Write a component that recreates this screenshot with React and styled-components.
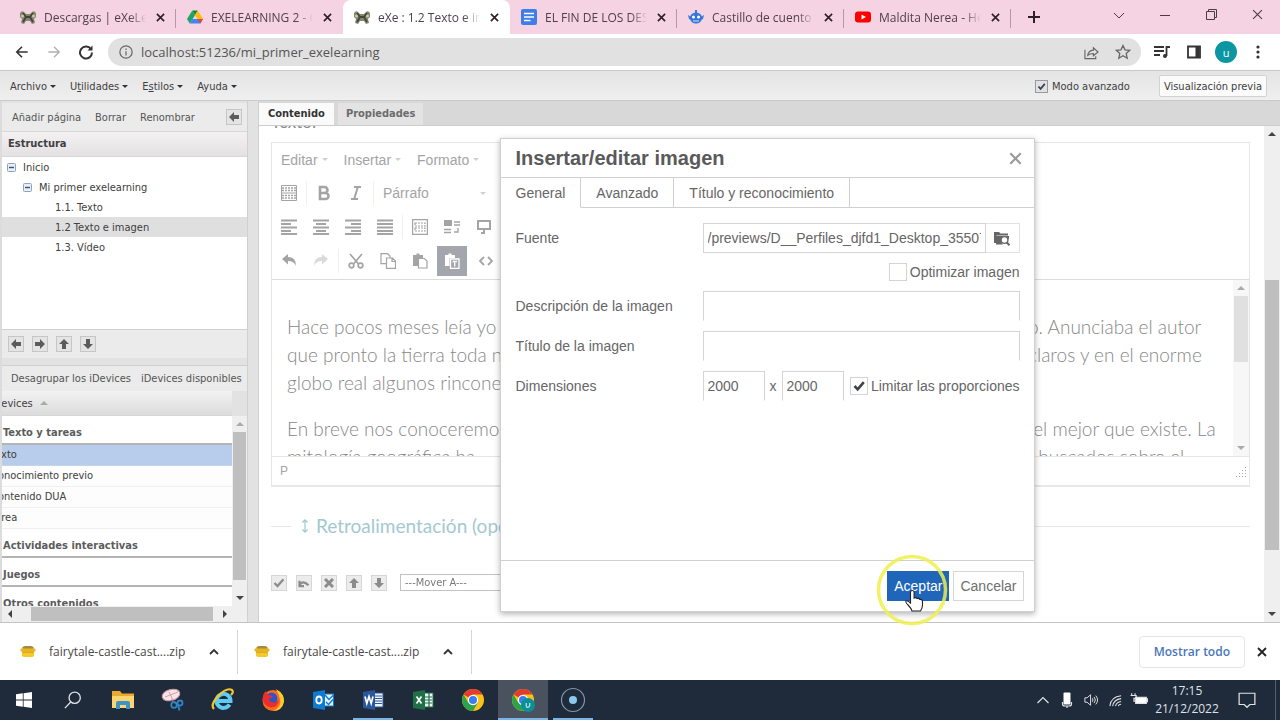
import React from "react";
import styled, { createGlobalStyle, css } from "styled-components";

const TAHOMA = `"DejaVu Sans Condensed", "DejaVu Sans", "Noto Sans", sans-serif`;
const SEGOE = `"Open Sans", "Noto Sans", sans-serif`;
const ARIAL = `"Liberation Sans", Arial, sans-serif`;
const ROUND = `Lato, "Open Sans", sans-serif`;

const GlobalStyle = createGlobalStyle`
  *, *::before, *::after { box-sizing: border-box; }
  body { margin: 0; font-family: ${TAHOMA}; font-size: 11px; color: #404040; overflow: hidden; }
  button, input, select { font: inherit; color: inherit; margin: 0; }
  button { border: 0; padding: 0; background: none; display: flex; align-items: center; justify-content: center; white-space: nowrap; }
  svg { display: block; flex: none; }
  p, h1, h2, h3 { margin: 0; }
`;

const Screen = styled.div`
  height: 100vh;
  display: flex;
  flex-direction: column;
  background: #fff;
`;

/* ---------- browser tabs ---------- */
const TabStrip = styled.header`
  flex: none;
  height: 34px;
  display: flex;
  padding-left: 9px;
  background: #f5d3e3;
  font-family: ${SEGOE};
  font-size: 12px;
  overflow: hidden;
`;
const BrowserTab = styled.div`
  flex: 0 1 167px;
  min-width: 0;
  display: flex;
  align-items: center;
  gap: 8px;
  padding: 0 10px 0 11px;
  color: #50404c;
  position: relative;
  ${(p) => p.$active && css`background: #fff; border-radius: 8px 8px 0 0;`}
  ${(p) => p.$divider && css`
    &::after { content: ""; position: absolute; right: 0; top: 9px; height: 19px; width: 1px; background: #b39aa8; }
  `}
`;
const TabTitle = styled.span`
  flex: 1;
  min-width: 0;
  white-space: nowrap;
  overflow: hidden;
  mask-image: linear-gradient(90deg, #000 84%, transparent);
`;
const TabClose = styled.button`
  width: 12px;
  height: 14px;
  color: #2c1f28;
`;
const NewTab = styled.button`
  width: 45px;
  color: #2c1f28;
`;
const WindowControls = styled.div`
  margin-left: auto;
  display: flex;
  height: 29px;
  color: #4a3c46;
`;
const WindowButton = styled.button`
  width: 46px;
`;

/* ---------- address bar ---------- */
const AddressBar = styled.div`
  flex: none;
  height: 36px;
  display: flex;
  align-items: center;
  padding: 0 6px;
  font-family: ${SEGOE};
`;
const NavButton = styled.button`
  width: 32px;
  height: 32px;
  color: ${(p) => (p.$dim ? "#b0b0b0" : "#333")};
`;
const Omnibox = styled.label`
  flex: 1;
  height: 28px;
  display: flex;
  align-items: center;
  gap: 8px;
  margin: 0 5px 0 6px;
  padding: 0 6px 0 11px;
  border-radius: 14px;
  background: #e1e1e1;
  color: #666;
`;
const Url = styled.input`
  flex: 1;
  min-width: 0;
  border: 0;
  padding: 0;
  background: none;
  color: #555;
  font-size: 13px;
`;
const OmniboxButton = styled.button`
  width: 24px;
  height: 24px;
  color: #666;
`;
const Avatar = styled.button`
  width: 22px;
  height: 22px;
  margin: 0 5px;
  border-radius: 50%;
  background: #0c96a2;
  color: #fff;
  font-size: 11px;
`;

/* ---------- application ---------- */
const Application = styled.main`
  flex: 1;
  min-height: 0;
  display: flex;
  flex-direction: column;
  border-top: 1px solid #c9c9c9;
  border-bottom: 1px solid #c4c4c4;
  background: #e2e2e2;
`;
const MenuBar = styled.nav`
  flex: none;
  height: 30px;
  display: flex;
  align-items: center;
  gap: 14px;
  padding: 1px 13px 0 10px;
  background: linear-gradient(#e4e4e4, #efefef);
  border-bottom: 1px solid #cacaca;
`;
const MenuButton = styled.button`
  gap: 3px;
  &::after {
    content: "";
    border: 3px solid transparent;
    border-top-color: #333;
    border-bottom: 0;
  }
`;
const AdvancedMode = styled.label`
  margin-left: auto;
  display: flex;
  align-items: center;
  gap: 4px;
`;
const TickBox = styled.input`
  appearance: none;
  flex: none;
  width: ${(p) => p.$size}px;
  height: ${(p) => p.$size}px;
  border: 1px solid ${(p) => (p.$size > 14 ? "#d4d4d4" : "#9a9a9a")};
  background: ${(p) => (p.$size > 14 ? "#fff" : "#dfe1e8")};
  &:checked {
    background-image: url("data:image/svg+xml,%3Csvg xmlns='http://www.w3.org/2000/svg' viewBox='0 0 16 16'%3E%3Cpath d='M3.5 8l3.2 3.4L12.8 4.2' fill='none' stroke='%23404448' stroke-width='2.6'/%3E%3C/svg%3E");
  }
`;
const PreviewButton = styled.button`
  height: 22px;
  margin-left: 15px;
  padding: 0 4px;
  border: 1px solid #d2d2d2;
  border-radius: 2px;
  background: #fbfbfb;
`;
const Workspace = styled.div`
  flex: 1;
  min-height: 0;
  display: flex;
`;

/* ---------- sidebar ---------- */
const Sidebar = styled.aside`
  flex: 0 0 248px;
  min-width: 0;
  display: flex;
  flex-direction: column;
  padding-top: 2px;
  border-left: 2px solid #dcdcdc;
  border-right: 1px solid #d0d0d0;
`;
const SideBar = styled.div`
  flex: none;
  height: ${(p) => p.$height}px;
  display: flex;
  align-items: center;
  gap: ${(p) => p.$gap}px;
  padding: 0 5px 0 ${(p) => p.$left}px;
  background: #ebebeb;
  color: #555;
`;
const PushEnd = styled.span`
  margin-left: auto;
`;
const SquareButton = styled.button`
  width: 16px;
  height: 16px;
  border: 1px solid #c6c6c6;
  background: #e4e4e4;
  color: #5c5c5c;
`;
const SectionTitle = styled.h2`
  flex: none;
  height: 26px;
  padding-left: 6px;
  font-size: 11px;
  line-height: 24px;
  background: linear-gradient(#f3f1f2, #e3e1e2);
  border-top: 1px solid #d8d8d8;
  border-bottom: 1px solid #d8d8d8;
`;
const Tree = styled.ul`
  flex: 1;
  min-height: 0;
  margin: 0;
  padding: 0;
  list-style: none;
  background: #fff;
  border-bottom: 1px solid #d0d0d0;
`;
const TreeRow = styled.li`
  height: 20px;
  display: flex;
  align-items: center;
  gap: 7px;
  padding-left: ${(p) => p.$indent}px;
  background: ${(p) => (p.$selected ? "#dfdfdf" : "none")};
`;
const Devices = styled.section`
  flex: none;
  height: 257px;
  margin-top: 7px;
  display: flex;
  flex-direction: column;
  border-top: 1px solid #d0d0d0;
`;
const DeviceHeader = styled.div`
  flex: none;
  height: 25px;
  display: flex;
  align-items: center;
  gap: 4px;
  margin-right: 15px;
  overflow: hidden;
  background: linear-gradient(#f2f2f2, #dcdcdc);
  border-bottom: 1px solid #d6d6d6;
`;
const DeviceBody = styled.div`
  flex: 1;
  min-height: 0;
  display: flex;
`;
const DeviceList = styled.div`
  flex: 1;
  overflow: hidden;
  background: #fff;
`;
const Scrolled = styled.div`
  margin-left: -11px;
`;
const GroupTitle = styled.h3`
  height: 29px;
  padding: 7px 0 0 12px;
  font-size: 11px;
  line-height: 20px;
  color: #5c5c5c;
  border-bottom: 2px solid #b4b4b4;
`;
const DeviceRow = styled.div`
  height: 21px;
  line-height: 20px;
  background: ${(p) => (p.$selected ? "#b7cdeb" : "#fdfdfd")};
  border-bottom: 1px solid ${(p) => (p.$selected ? "#c4d4ea" : "#f0f0f0")};
`;

/* ---------- scroll bars ---------- */
const Track = styled.div`
  flex: none;
  display: flex;
  align-items: center;
  flex-direction: ${(p) => (p.$across ? "row" : "column")};
  ${(p) => (p.$across ? "height" : "width")}: ${(p) => p.$size || 15}px;
  background: ${(p) => (p.$faint ? "#f7f7f7" : "#efefef")};
`;
const Arrow = styled.span`
  flex: none;
  width: 15px;
  height: 16px;
  display: flex;
  align-items: center;
  justify-content: center;
  color: ${(p) => (p.$dim ? "#aaa" : "#444")};
`;
const Thumb = styled.span`
  align-self: stretch;
  margin: ${(p) => (p.$across ? "1px 0" : "0 1px")};
  flex: ${(p) => p.$share} 1 0;
  background: ${(p) => (p.$faint ? "#e0e0e0" : "#bfbfbf")};
`;
const Rest = styled.span`
  flex: ${(p) => p.$share} 1 0;
`;

/* ---------- content ---------- */
const Content = styled.section`
  flex: 1;
  min-width: 0;
  margin-left: 10px;
  display: flex;
  flex-direction: column;
  position: relative;
  border-left: 1px solid #cfcfcf;
`;
const ContentTabs = styled.div`
  flex: none;
  height: 25px;
  display: flex;
  align-items: flex-end;
  gap: 4px;
  background: #d8d8d8;
  border-bottom: 1px solid #cdcdcd;
`;
const ContentTab = styled.button`
  height: 22px;
  padding: 0 ${(p) => (p.$active ? 9 : 8)}px 2px;
  font-weight: bold;
  color: ${(p) => (p.$active ? "#333" : "#6c6c6c")};
  background: ${(p) => (p.$active ? "#fafafa" : "#e3e3e3")};
`;
const ContentBody = styled.div`
  flex: 1;
  min-height: 0;
  display: flex;
  background: #fff;
`;
const Page = styled.div`
  flex: 1;
  min-width: 0;
  overflow: hidden;
  padding: 0 14px 0 12px;
`;
const FieldTitle = styled.h2`
  height: 16px;
  font: 17px/20px ${ROUND};
  color: #8a8a8a;
  display: flex;
  align-items: center;
  margin-top: -12px;
  margin-bottom: 12px;
`;
const Editor = styled.div`
  border: 1px solid #e6e6e6;
  border-bottom: 2px solid #e8e8e8;
  height: 345px;
  display: flex;
  flex-direction: column;
  color: #a4a4a4;
  font-family: ${ARIAL};
`;
const EditorMenus = styled.div`
  height: 33px;
  display: flex;
  align-items: center;
  gap: 16px;
  padding-left: 9px;
  font-size: 14px;
`;
const EditorMenu = styled.button`
  gap: 4px;
  &::after {
    content: "";
    border: 3px solid transparent;
    border-top-color: #d0d0d0;
    border-bottom: 0;
  }
`;
const ToolRow = styled.div`
  height: 34px;
  display: flex;
  align-items: center;
  padding-left: 1px;
`;
const Tool = styled.button`
  width: 32px;
  height: 30px;
  opacity: ${(p) => (p.$dim ? 0.4 : 1)};
  ${(p) => p.$on && css`background: #a3a7ad; color: #fff; width: 30px; margin: 0 3px 0 1px;`}
`;
const Block = styled.button`
  width: 103px;
  margin-left: 8px;
  justify-content: space-between;
  font-size: 14px;
  &::after {
    content: "";
    border: 3px solid transparent;
    border-top-color: #d0d0d0;
    border-bottom: 0;
  }
`;
const Divider = styled.span`
  width: 1px;
  height: 24px;
  margin: 0 1px;
  background: #f0f0f0;
`;
const Writing = styled.div`
  flex: 1;
  min-height: 0;
  display: flex;
  margin-top: 1px;
  border-top: 1px solid #dcdcdc;
`;
const Prose = styled.div`
  flex: 1;
  overflow: hidden;
  padding: 33px 0 0 15px;
  font: 300 19px/28px ${ROUND};
  color: #888;
`;
const Paragraph = styled.p`
  display: grid;
  grid-template-columns: 741px 1fr;
  margin-bottom: 18px;
  white-space: pre;
`;
const StatusLine = styled.div`
  flex: none;
  height: 29px;
  display: flex;
  align-items: center;
  justify-content: space-between;
  padding: 0 2px 0 8px;
  border-top: 1px solid #e6e6e6;
  font-size: 12px;
`;
const Feedback = styled.div`
  display: flex;
  align-items: center;
  height: 24px;
  margin-top: 27px;
  gap: 7px;
  font: 19px/24px ${ROUND};
  color: #a3c9d0;
  &::before, &::after { content: ""; height: 1px; background: #e6e6e6; }
  &::before { width: 20px; }
  &::after { flex: 1; }
`;
const FeedbackLabel = styled.span`
  display: flex;
  align-items: center;
  gap: 4px;
`;
const Actions = styled.div`
  display: flex;
  align-items: center;
  gap: 9px;
  margin-top: 36px;
  opacity: 0.7;
`;
const MoveTo = styled.select`
  appearance: none;
  width: 160px;
  height: 17px;
  margin-left: 4px;
  padding: 0 4px;
  border: 1px solid #aaa;
  background: #fff;
`;

/* ---------- dialog ---------- */
const Overlay = styled.div`
  position: absolute;
  inset: 37px 5px auto 0;
  display: flex;
  justify-content: center;
`;
const Dialog = styled.div`
  width: 535px;
  height: 474px;
  display: flex;
  flex-direction: column;
  background: #fff;
  border: 1px solid #d0d0d0;
  box-shadow: 0 2px 6px rgba(0, 0, 0, 0.3);
  font: 14px/20px ${ARIAL};
  color: #666;
`;
const DialogHead = styled.div`
  height: 39px;
  display: flex;
  align-items: center;
  justify-content: space-between;
  padding: 0 12px 0 15px;
  border-bottom: 1px solid #d0d0d0;
  color: #999;
`;
const DialogTitle = styled.h1`
  font-size: 20px;
  color: #5a5a5a;
`;
const DialogTabs = styled.div`
  height: 30px;
  display: flex;
  &::after { content: ""; flex: 1; border-bottom: 1px solid #d0d0d0; }
`;
const DialogTab = styled.button`
  padding: 1px 15px 0;
  border-right: 1px solid #d0d0d0;
  border-bottom: 1px solid ${(p) => (p.$active ? "#fff" : "#d0d0d0")};
`;
const Form = styled.form`
  flex: 1;
  padding: 15px 14px 0 15px;
  display: flex;
  flex-direction: column;
  gap: 10px;
`;
const FormRow = styled.div`
  height: 30px;
  display: grid;
  grid-template-columns: 187px 1fr;
  align-items: center;
`;
const OptionRow = styled.div`
  height: 18px;
  display: flex;
  justify-content: flex-end;
`;
const Controls = styled.div`
  height: 30px;
  display: flex;
  align-items: center;
`;
const TextBox = styled.input`
  flex: ${(p) => (p.$short ? "0 0 62px" : "1")};
  min-width: 0;
  height: 30px;
  padding: 0 4px;
  border: 1px solid #d4d4d4;
  border-bottom-color: ${(p) => (p.$closed ? "#d4d4d4" : "transparent")};
  background: #fff;
`;
const Browse = styled.button`
  width: 34px;
  height: 30px;
  border: 1px solid #e2e2e2;
  border-left: 0;
`;
const Times = styled.span`
  width: 17px;
  text-align: center;
`;
const CheckLabel = styled.label`
  margin-left: auto;
  display: flex;
  align-items: center;
  gap: 3px;
  white-space: nowrap;
`;
const DialogFoot = styled.div`
  height: 51px;
  display: flex;
  align-items: center;
  justify-content: flex-end;
  gap: 4px;
  padding: 0 10px;
  border-top: 1px solid #d0d0d0;
`;
const DialogButton = styled.button`
  position: relative;
  height: 30px;
  padding: 0 6px;
  border: 1px solid ${(p) => (p.$primary ? "#1f66ba" : "#d6d6d6")};
  background: ${(p) => (p.$primary ? "#1f66ba" : "#fff")};
  color: ${(p) => (p.$primary ? "#fff" : "#6f6f6f")};
`;
const Pointer = styled.svg`
  position: absolute;
  left: -14px;
  top: -20px;
  z-index: 2;
`;

/* ---------- downloads ---------- */
const Downloads = styled.div`
  flex: none;
  height: 57px;
  display: flex;
  align-items: center;
  padding: 1px 8px 0 4px;
  font: 12px/16px ${SEGOE};
  color: #484848;
`;
const Download = styled.div`
  width: 234px;
  height: 44px;
  display: flex;
  align-items: center;
  padding: 0 13px 0 16px;
  gap: 13px;
  border-right: 1px solid #d5d5d5;
`;
const DownloadMenu = styled.button`
  margin-left: auto;
  width: 20px;
  height: 20px;
  color: #333;
`;
const ShowAll = styled.button`
  margin-left: auto;
  height: 32px;
  padding: 0 14px;
  border: 1px solid #e6e6e6;
  border-radius: 4px;
  color: #4a76ba;
  font-weight: 600;
`;
const CloseShelf = styled.button`
  width: 20px;
  height: 20px;
  margin-left: 7px;
  color: #222;
`;

/* ---------- task bar ---------- */
const TaskBar = styled.footer`
  flex: none;
  height: 40px;
  display: flex;
  background: #1f2a3a;
  color: #dfe3e8;
  font-family: ${SEGOE};
`;
const Task = styled.button`
  width: ${(p) => p.$width || 50}px;
  background: ${(p) => (p.$active ? "#4a525f" : "none")};
  box-shadow: ${(p) => (p.$open ? "inset 5px 0 #1f2a3a, inset -5px 0 #1f2a3a, inset 0 -2px #7db4e6" : p.$active ? "inset 0 -2px #7db4e6" : "none")};
`;
const Tray = styled.div`
  margin-left: auto;
  display: flex;
  padding-right: 4px;
  border-right: 1px solid #56606d;
  margin-right: 4px;
`;
const TrayButton = styled.button`
  width: ${(p) => p.$width || 24}px;
`;
const Clock = styled.button`
  width: 72px;
  flex-direction: column;
  font-size: 12px;
  line-height: 18px;
`;

/* ---------- small drawings ---------- */
const Cross = ({ size = 10, w = 1.8 }) => (
  <svg width={size} height={size} viewBox="0 0 10 10" stroke="currentColor" strokeWidth={w} fill="none"><path d="M1 1l8 8M9 1l-8 8" /></svg>
);
const Line = ({ d, size = 16, w = 1.6, fill = "none", box = 16, children }) => (
  <svg width={size} height={size} viewBox={`0 0 ${box} ${box}`} fill={fill} stroke="currentColor" strokeWidth={w}>{d && <path d={d} />}{children}</svg>
);
const Tri = ({ turn = 0 }) => (
  <svg width="8" height="8" viewBox="0 0 8 8" fill="currentColor"><path transform={`rotate(${turn} 4 4)`} d="M0 6l4-4 4 4z" /></svg>
);
const Fat = ({ turn = 0 }) => (
  <svg width="12" height="12" viewBox="0 0 12 12" fill="currentColor"><path transform={`rotate(${turn} 6 6)`} d="M1 6l5-5v3h5v4H6v3z" /></svg>
);
const ExeIcon = () => (
  <svg width="16" height="16" viewBox="0 0 16 16">
    <path d="M0 4q2-3 4-1l2 2h4l2-2q2-2 4 1v4l-2 2 1 4-3 1-2-3H6l-2 3-3-1 1-4-2-2z" fill="#85876f" />
    <path d="M3 4l3 4-3 5M13 4l-3 4 3 5M6 8h4" fill="none" stroke="#43463a" strokeWidth="1.800" />
    <circle cx="2.500" cy="7" r="1.500" fill="#c4c9ad" /><circle cx="13.500" cy="7" r="1.500" fill="#c4c9ad" />
  </svg>
);
const DriveIcon = () => (
  <svg width="16" height="16" viewBox="0 0 16 16">
    <path d="M5.300 1.500h5.400L8 6.200z" fill="#188038" /><path d="M5.300 1.500L8 6.200 2.700 14.500 0 10z" fill="#1fa463" />
    <path d="M10.700 1.500L16 10h-5.400L8 6.200z" fill="#fbbc04" /><path d="M5.400 10H16l-2.700 4.500H2.700z" fill="#4285f4" />
    <path d="M10.600 10H16l-2.700 4.500z" fill="#ea4335" />
  </svg>
);
const DocIcon = () => (
  <svg width="16" height="16" viewBox="0 0 16 16"><rect width="16" height="16" rx="2" fill="#3f7de8" /><path d="M3 4.500h10M3 8h10M3 11.500h6.500" stroke="#fff" strokeWidth="1.700" /></svg>
);
const RobotIcon = () => (
  <svg width="16" height="16" viewBox="0 0 16 16" fill="#3477d6"><path d="M7 1h2v3H7zM0 6l3 2v3L1 10zM16 6l-3 2v3l2-1z" /><ellipse cx="8" cy="9" rx="6" ry="5.500" /><circle cx="5.500" cy="8" r="1.500" fill="#fff" /><circle cx="10.500" cy="8" r="1.500" fill="#fff" /><path d="M5 12h6" stroke="#cfe2ff" /></svg>
);
const TubeIcon = () => (
  <svg width="16" height="16" viewBox="0 0 16 16"><rect y="2.500" width="16" height="11" rx="3" fill="#f00" /><path d="M6.500 5.500v5L11 8z" fill="#fff" /></svg>
);
const Expander = () => (
  <svg width="9" height="9" viewBox="0 0 9 9"><rect x=".5" y=".5" width="8" height="8" rx="1" fill="#e8eef5" stroke="#8fa3ba" /><path d="M2 4.500h5" stroke="#33557c" strokeWidth="1.400" /></svg>
);
const Zip = () => (
  <svg width="16" height="14" viewBox="0 0 16 14"><path d="M2.500 4V2.500Q3 1 5 1h6q2 0 2.500 1.500V4z" fill="#a88a3c" /><rect x=".5" y="3.500" width="15" height="3" rx="1" fill="#e9b41c" /><path d="M2 6.500h12v3.700Q14 12 12 12H4q-2 0-2-1.800z" fill="#f6c92a" /><path d="M2 7h12" stroke="#c4940f" /></svg>
);
const Chrome = ({ badge }) => (
  <svg width="24" height="24" viewBox="0 0 24 24">
    <circle cx="12" cy="12" r="11" fill="#fbc116" />
    <path d="M12 12L2.500 6.500A11 11 0 0 1 21.500 6.500H12z" fill="#e33b2e" />
    <path d="M2.500 6.500A11 11 0 0 0 12 23l4.800-8.300L12 12 7.200 14.700z" fill="#2ba24c" />
    <circle cx="12" cy="12" r="5.200" fill="#fff" /><circle cx="12" cy="12" r="4" fill="#3b7ded" />
    {badge && <><circle cx="17" cy="17" r="7" fill="#0c8f96" /><path d="M15.200 15v2.700q0 1.600 1.600 1.600t1.900-1.600V15" stroke="#b9e6e8" strokeWidth="1.200" fill="none" /></>}
  </svg>
);
const OfficeIcon = ({ color, mark, panel }) => (
  <svg width="22" height="22" viewBox="0 0 22 22">
    <rect x="12" y="4" width="9" height="14" fill="#eef3f8" stroke={color} />
    <path d={panel} stroke={color} strokeWidth="1.200" fill="none" />
    <path d="M1 3l12-2v20L1 19z" fill={color} />
    <path d={mark} stroke="#fff" strokeWidth="1.700" fill="none" />
  </svg>
);

const ALIGN = [
  "M0 1.500h16M0 5h10M0 8.500h16M0 12h10M0 15h16",
  "M0 1.500h16M3 5h10M0 8.500h16M3 12h10M0 15h16",
  "M0 1.500h16M6 5h10M0 8.500h16M6 12h10M0 15h16",
  "M0 1.500h16M0 5h16M0 8.500h16M0 12h16M0 15h16",
];

const BROWSER_TABS = [
  { title: "Descargas | eXeLearning", icon: <ExeIcon />, divider: true },
  { title: "EXELEARNING 2 - Google", icon: <DriveIcon /> },
  { title: "eXe : 1.2 Texto e imagen", icon: <ExeIcon />, active: true },
  { title: "EL FIN DE LOS DESEOS", icon: <DocIcon />, divider: true },
  { title: "Castillo de cuento de hadas", icon: <RobotIcon />, divider: true },
  { title: "Maldita Nerea - Hecho", icon: <TubeIcon />, divider: true },
];

function BrowserChrome() {
  return (
    <>
      <TabStrip>
        {BROWSER_TABS.map((t) => (
          <BrowserTab key={t.title} $active={t.active} $divider={t.divider}>
            {t.icon}
            <TabTitle>{t.title}</TabTitle>
            <TabClose aria-label="Cerrar pestaña"><Cross size={9} /></TabClose>
          </BrowserTab>
        ))}
        <NewTab aria-label="Nueva pestaña"><Line size={12} box={12} w={2} d="M6 0v12M0 6h12" /></NewTab>
        <WindowControls>
          <WindowButton aria-label="Buscar pestañas"><Line size={10} box={10} w={1} d="M0 3l5 5 5-5" /></WindowButton>
          <WindowButton aria-label="Minimizar"><Line size={10} box={10} w={1} d="M0 5.500h10" /></WindowButton>
          <WindowButton aria-label="Restaurar"><Line size={11} box={11} w={1} d="M.5 2.500h8v8h-8zM2.500 2.500v-2h8v8h-2" /></WindowButton>
          <WindowButton aria-label="Cerrar"><Cross w={1} size={11} /></WindowButton>
        </WindowControls>
      </TabStrip>
      <AddressBar>
        <NavButton aria-label="Atrás"><Line d="M14.500 8H2M8 2L2 8l6 6" w={1.8} size={14} /></NavButton>
        <NavButton $dim aria-label="Adelante"><Line d="M1.500 8H14M8 2l6 6-6 6" size={14} /></NavButton>
        <NavButton aria-label="Recargar"><Line size={16} w={2} d="M13 5.200A6 6 0 1 0 14 8.500"><path d="M14.500 1.500v5h-5z" fill="currentColor" stroke="none" /></Line></NavButton>
        <Omnibox>
          <Line size={14} w={1.4}><circle cx="8" cy="8" r="7" /><path d="M8 7v5M8 4v1.600" /></Line>
          <Url aria-label="Dirección" defaultValue="localhost:51236/mi_primer_exelearning" />
          <OmniboxButton aria-label="Compartir"><Line size={15} w={1.2} d="M1 5v9.500h11.500V12M4 11q.5-5 6-5.500V3l5 4.500-5 4V9q-4 0-6 2z" /></OmniboxButton>
          <OmniboxButton aria-label="Marcador"><Line size={16} w={1.3} d="M8 1.500l2 4.300 4.700.5-3.500 3.200 1 4.700L8 11.800l-4.200 2.400 1-4.700L1.300 6.300 6 5.800z" /></OmniboxButton>
        </Omnibox>
        <NavButton aria-label="Multimedia"><Line size={16} w={1.8} d="M0 3h10M0 7h10M0 11h6M12.500 12V3H16"><circle cx="11" cy="12" r="2" fill="currentColor" stroke="none" /></Line></NavButton>
        <NavButton aria-label="Panel lateral"><Line size={16} w={1.8} d="M2 2.500h12v11H2z"><path d="M9.500 3h4v10h-4z" fill="currentColor" stroke="none" /></Line></NavButton>
        <Avatar>u</Avatar>
        <NavButton aria-label="Menú"><Line size={16} w={0}><g fill="currentColor"><circle cx="8" cy="3" r="1.600" /><circle cx="8" cy="8" r="1.600" /><circle cx="8" cy="13" r="1.600" /></g></Line></NavButton>
      </AddressBar>
    </>
  );
}

function ProjectSidebar() {
  return (
    <Sidebar>
      <SideBar $height={28} $gap={14} $left={10}>
        <button>Añadir página</button>
        <button>Borrar</button>
        <button>Renombrar</button>
        <PushEnd><SquareButton aria-label="Plegar"><Fat /></SquareButton></PushEnd>
      </SideBar>
      <SectionTitle>Estructura</SectionTitle>
      <Tree>
        <TreeRow $indent={5}><Expander />Inicio</TreeRow>
        <TreeRow $indent={21}><Expander />Mi primer exelearning</TreeRow>
        <TreeRow $indent={53}>1.1. Texto</TreeRow>
        <TreeRow $indent={53} $selected>1.2 Texto e imagen</TreeRow>
        <TreeRow $indent={53}>1.3. Vídeo</TreeRow>
      </Tree>
      <SideBar $height={28} $gap={8} $left={6}>
        {[["Izquierda", 0], ["Derecha", 180], ["Subir", 90], ["Bajar", 270]].map(([name, turn]) => (
          <SquareButton key={name} aria-label={name}><Fat turn={turn} /></SquareButton>
        ))}
      </SideBar>
      <Devices>
        <SideBar $height={25} $gap={10} $left={9}>
          <button>Desagrupar los iDevices</button>
          <button>iDevices disponibles</button>
        </SideBar>
        <DeviceHeader><Scrolled>iDevices</Scrolled><Arrow $dim><Tri /></Arrow></DeviceHeader>
        <DeviceBody>
          <DeviceList>
            <Scrolled>
              <GroupTitle>Texto y tareas</GroupTitle>
              <DeviceRow $selected>Texto</DeviceRow>
              <DeviceRow>Conocimiento previo</DeviceRow>
              <DeviceRow>Contenido DUA</DeviceRow>
              <DeviceRow>Tarea</DeviceRow>
              <GroupTitle>Actividades interactivas</GroupTitle>
              <GroupTitle>Juegos</GroupTitle>
              <GroupTitle>Otros contenidos</GroupTitle>
            </Scrolled>
          </DeviceList>
          <Track>
            <Arrow $dim><Tri /></Arrow><Thumb $share={146} /><Rest $share={10} /><Arrow><Tri turn={180} /></Arrow>
          </Track>
        </DeviceBody>
        <Track $across $size={16}>
          <Arrow><Tri turn={270} /></Arrow><Rest $share={7} /><Thumb $across $share={90} /><Rest $share={2} />
          <Arrow><Tri turn={90} /></Arrow><Arrow />
        </Track>
      </Devices>
    </Sidebar>
  );
}

function TextEditor() {
  return (
    <Editor>
      <EditorMenus>
        <EditorMenu>Editar</EditorMenu><EditorMenu>Insertar</EditorMenu><EditorMenu>Formato</EditorMenu>
      </EditorMenus>
      <ToolRow>
        <Tool aria-label="Barras"><Line w={1}><path d="M.5.5h15v15H.5zM0 8h16" /><path d="M1 3h14M1 5.500h14M1 10.500h14M1 13h14" strokeWidth="1.500" strokeDasharray="2 1" /></Line></Tool>
        <Divider />
        <Tool aria-label="Negrita"><Line w={2.6} d="M4 2h4.500a3 3 0 0 1 0 6H4zM4 8h5.500a3 3 0 0 1 0 6H4z" /></Tool>
        <Tool aria-label="Cursiva"><Line w={2} d="M6 2h7M3 14h7M9.800 2L6.200 14" /></Tool>
        <Divider />
        <Block>Párrafo</Block>
      </ToolRow>
      <ToolRow>
        {ALIGN.map((d) => <Tool key={d} aria-label="Alinear"><Line w={2} d={d} /></Tool>)}
        <Divider />
        <Tool aria-label="Plantilla"><Line w={1.2} d="M.6.6h14.800v14.800H.6z"><path d="M3 4h10v3H3zM3 9h10v3H3z" strokeDasharray="2 1" /></Line></Tool>
        <Tool aria-label="Tabla de contenidos"><Line w={1.4} d="M10 3h6M10 6h6M0 10.500h7M0 13.500h7M10 13h4V9"><path d="M0 1h8v6H0z" fill="currentColor" stroke="none" /></Line></Tool>
        <Tool aria-label="Efecto"><Line w={2} d="M2 2h12v8H2zM8 10v4H5" /></Tool>
      </ToolRow>
      <ToolRow>
        <Tool aria-label="Deshacer"><Line w={0}><path d="M1 6l6-5v3q8 0 8 9-2-5-8-5v3.500z" fill="currentColor" /></Line></Tool>
        <Tool $dim aria-label="Rehacer"><Line w={0}><path d="M15 6L9 1v3q-8 0-8 9 2-5 8-5v3.500z" fill="currentColor" /></Line></Tool>
        <Divider />
        <Tool aria-label="Cortar"><Line w={1.7} d="M2 1l8.500 10M14 1L5.500 11"><circle cx="3.500" cy="12.500" r="2.300" /><circle cx="12.500" cy="12.500" r="2.300" /></Line></Tool>
        <Tool aria-label="Copiar"><Line w={1.2} d="M10 4.500V3L7.500.7H1v10h5M6.500 5h6l3 3v7.300h-9zM12 5v3.500h3.500" /></Tool>
        <Tool aria-label="Pegar"><Line w={1.2} d="M6.500 5.500h6l2.500 2.500v7H6.500z"><path d="M1 2h3.500V.5h3V2H11v3H6v8H1z" fill="currentColor" stroke="none" /></Line></Tool>
        <Tool $on aria-label="Pegar como texto"><Line w={1.3} d="M6.500 6h8.500v9.300H6.500zM8.500 8.500h4.500M10.700 8.500v5"><path d="M1 2h3.500V.5h3V2H11v3H5.500v8H1z" fill="currentColor" stroke="none" /></Line></Tool>
        <Tool aria-label="Código"><Line w={1.8} d="M6 4L2 8l4 4M10 4l4 4-4 4" /></Tool>
      </ToolRow>
      <Writing>
        <Prose>
          <Paragraph>
            <span>Hace pocos meses leía yo</span><span>o. Anunciaba el autor</span>
            <span>que pronto la tierra toda n</span><span>claros y en el enorme</span>
            <span>globo real algunos rincone</span>
          </Paragraph>
          <Paragraph>
            <span>En breve nos conoceremos</span><span> el mejor que existe. La</span>
            <span>mitología geográfica ha</span><span>  buscados sobre el</span>
          </Paragraph>
        </Prose>
        <Track $faint $size={16}>
          <Arrow $dim><Tri /></Arrow><Thumb $faint $share={46} /><Rest $share={54} /><Arrow $dim><Tri turn={180} /></Arrow>
        </Track>
      </Writing>
      <StatusLine>P<Line size={12} w={1} box={12} d="M10.500 2v1M10.500 5v1M7.500 5v1M10.500 8v1M7.500 8v1M4.500 8v1M10.500 11v1M7.500 11v1M4.500 11v1M1.500 11v1" /></StatusLine>
    </Editor>
  );
}

function ImageDialog() {
  return (
    <Overlay>
      <Dialog role="dialog" aria-labelledby="dialog-title">
        <DialogHead>
          <DialogTitle id="dialog-title">Insertar/editar imagen</DialogTitle>
          <button aria-label="Cerrar"><Cross size={13} w={1.6} /></button>
        </DialogHead>
        <DialogTabs>
          <DialogTab $active>General</DialogTab>
          <DialogTab>Avanzado</DialogTab>
          <DialogTab>Título y reconocimiento</DialogTab>
        </DialogTabs>
        <Form onSubmit={(e) => e.preventDefault()}>
          <FormRow>
            <label htmlFor="source">Fuente</label>
            <Controls>
              <TextBox id="source" $closed defaultValue="/previews/D__Perfiles_djfd1_Desktop_35507" />
              <Browse type="button" aria-label="Examinar">
                <Line w={1.4}>
                  <path d="M0 2h5l1.500 1.500H14V5.500H2.500V13H0z" fill="currentColor" stroke="none" />
                  <path d="M2 6h13v4a4 4 0 1 0-6 4.500H2z" fill="currentColor" stroke="none" />
                  <circle cx="10.500" cy="10" r="3.400" fill="#fff" />
                  <path d="M12.800 12.500l2.700 2.700" strokeWidth="2" />
                </Line>
              </Browse>
            </Controls>
          </FormRow>
          <OptionRow>
            <CheckLabel><TickBox type="checkbox" $size={18} />Optimizar imagen</CheckLabel>
          </OptionRow>
          <FormRow>
            <label htmlFor="description">Descripción de la imagen</label>
            <Controls><TextBox id="description" /></Controls>
          </FormRow>
          <FormRow>
            <label htmlFor="image-title">Título de la imagen</label>
            <Controls><TextBox id="image-title" /></Controls>
          </FormRow>
          <FormRow>
            <label htmlFor="width">Dimensiones</label>
            <Controls>
              <TextBox id="width" $short defaultValue="2000" />
              <Times>x</Times>
              <TextBox aria-label="Alto" $short defaultValue="2000" />
              <CheckLabel><TickBox type="checkbox" $size={18} defaultChecked />Limitar las proporciones</CheckLabel>
            </Controls>
          </FormRow>
        </Form>
        <DialogFoot>
          <DialogButton $primary>
            Aceptar
            <Pointer width="76" height="76" viewBox="0 0 76 76" aria-hidden="true">
              <circle cx="38" cy="38" r="33.500" fill="none" stroke="#eef04e" strokeWidth="3.500" opacity=".85" />
              <path d="M36.500 51V40.500q0-2 1.800-2t1.800 2V46q1.800-1 3 .6 1.800-.8 2.800.8 2-.4 2.600 1.600V53q0 3-2 6H38q-1-3-3.500-5.500Q31 50 32 49t4.500 2z" fill="#fff" stroke="#222" strokeWidth="1.100" />
            </Pointer>
          </DialogButton>
          <DialogButton>Cancelar</DialogButton>
        </DialogFoot>
      </Dialog>
    </Overlay>
  );
}

function Windows() {
  return (
    <TaskBar>
      <Task $width={48} aria-label="Inicio"><svg width="16" height="16" viewBox="0 0 16 16" fill="#fff"><path d="M0 2.300l6.800-1v6.300H0zM7.600 1.200L16 0v7.600H7.600zM0 8.400h6.800v6.300l-6.800-1zM7.600 8.400H16V16l-8.400-1.200z" /></svg></Task>
      <Task aria-label="Buscar"><Line size={18} w={1.2}><circle cx="9.500" cy="6" r="5" /><path d="M6 9.800L.8 15.200" /></Line></Task>
      <Task aria-label="Explorador"><svg width="22" height="20" viewBox="0 0 22 20"><path d="M0 1h8l2 2.500h12V18H0z" fill="#e8a92e" /><path d="M0 6h22v12H0z" fill="#fbd66e" /><path d="M4 19v-6q0-2 2-2h10q2 0 2 2v6h-4v-4H8v4z" fill="#3c93c9" /></svg></Task>
      <Task aria-label="Recortes"><svg width="24" height="24" viewBox="0 0 24 24" fill="none"><ellipse cx="10" cy="7" rx="9" ry="5.500" transform="rotate(-15 10 7)" fill="#f4e6e8" stroke="#c99aa0" /><path d="M4 9l13-5M8 4l4 8" stroke="#dc9aa0" /><path d="M10 12l7 5" stroke="#c4525c" strokeWidth="1.500" /><circle cx="13" cy="17" r="2.800" stroke="#2d84c6" strokeWidth="1.800" /><circle cx="19" cy="15" r="2.500" stroke="#2d84c6" strokeWidth="1.800" /><path d="M17 17l1.500 5.500" stroke="#2d84c6" strokeWidth="1.800" /></svg></Task>
      <Task aria-label="Internet Explorer"><svg width="24" height="24" viewBox="0 0 24 24" fill="none"><path d="M18.500 16.500A7 7 0 1 1 19.500 13H7" stroke="#5fcbf3" strokeWidth="4" /><path d="M3 21Q-1 17 7 8q9-9 14-6 2 2-1 5" stroke="#f3c52f" strokeWidth="2.200" /></svg></Task>
      <Task aria-label="Firefox"><svg width="24" height="24" viewBox="0 0 24 24"><circle cx="12" cy="12.500" r="10.500" fill="#ff6a1f" /><path d="M15 1q9 5 8 13-2 9-11 9 9-4 7-12-1-5-4-10z" fill="#ffcb2d" /><circle cx="10.500" cy="10.500" r="6" fill="#2e54c9" /><path d="M1.500 11Q2 5 5 3q0 3 3 4l4 1q-1 2-4 2.500 0 4 5 4 3 0 5-3-1 8-8 8-7-1-8.500-8.500z" fill="#e92f2c" /></svg></Task>
      <Task aria-label="Outlook"><svg width="22" height="22" viewBox="0 0 22 22" fill="none"><rect x="12" y="5" width="9.500" height="12" fill="#e4f0fa" stroke="#0f7bd0" /><path d="M13 6l4 4.500L21.500 6M14 13l2.500 2.500 4.500-5" stroke="#0f7bd0" strokeWidth="1.400" /><path d="M1 3l12-2v20L1 19z" fill="#0f7bd0" /><ellipse cx="7" cy="11" rx="2.700" ry="3.500" stroke="#fff" strokeWidth="1.800" /></svg></Task>
      <Task $open aria-label="Word"><OfficeIcon color="#2a579a" panel="M13 7h7M13 9.500h7M13 12h7M13 14.500h7" mark="M3 7.500l1.800 7 2.200-7 2.200 7 1.800-7" /></Task>
      <Task aria-label="Excel"><OfficeIcon color="#1e7145" panel="M13 8h7M13 11h7M13 14h7M17 4v14" mark="M4.500 7.500l5 7M9.500 7.500l-5 7" /></Task>
      <Task aria-label="Chrome"><Chrome /></Task>
      <Task $active aria-label="Chrome, perfil u"><Chrome badge /></Task>
      <Task $open aria-label="Grabadora"><svg width="26" height="26" viewBox="0 0 26 26"><circle cx="13" cy="13" r="11.500" fill="none" stroke="#7f97ac" strokeWidth="1.200" /><circle cx="13" cy="13" r="4" fill="#8cc9ee" /></svg></Task>
      <Tray>
        <TrayButton aria-label="Iconos ocultos"><Line size={12} box={12} w={1.2} d="M.5 9L6 3.500 11.500 9" /></TrayButton>
        <TrayButton aria-label="Micrófono"><Line w={1.2} d="M3.500 10v2q0 2 2.500 2h4q2.500 0 2.500-2v-2M8 14v2"><rect x="4.500" y=".5" width="7" height="12" rx="1" fill="#fff" stroke="none" /></Line></TrayButton>
        <TrayButton aria-label="Volumen"><Line size={14} w={1.1} d="M1 5.500h2.500L7.500 2v12L3.500 10.500H1zM9.500 6q1.500 2 0 4M11.500 4.500q3 3.500 0 7M13.500 3q4 5 0 10" /></TrayButton>
        <TrayButton aria-label="Red"><Line size={15} w={1.1} d="M2 14Q3 4 14 3M5 14Q6 7 14 6M8 14q1-4.500 6-5M11 14q.5-2 3-2" /></TrayButton>
        <TrayButton aria-label="Batería"><Line size={18} w={1} d="M1.500 2v2M4.500 2v2M.5 4h5v2.500h-2V9h2"><path d="M5 5.500h9.500V11H5zM14.500 7h1v2.500h-1z" fill="#fff" /></Line></TrayButton>
        <Clock><span>17:15</span><span>21/12/2022</span></Clock>
        <TrayButton $width={48} aria-label="Notificaciones"><Line size={18} w={1.1} d="M1 2h14v10h-4.500L8 14.500 5.500 12H1z" /></TrayButton>
      </Tray>
    </TaskBar>
  );
}

export default function App() {
  return (
    <Screen>
      <GlobalStyle />
      <BrowserChrome />
      <Application>
        <MenuBar>
          <MenuButton>Archivo</MenuButton>
          <MenuButton><span>U<u>t</u>ilidades</span></MenuButton>
          <MenuButton><span>E<u>s</u>tilos</span></MenuButton>
          <MenuButton>Ayuda</MenuButton>
          <AdvancedMode><TickBox type="checkbox" $size={13} defaultChecked />Modo avanzado</AdvancedMode>
          <PreviewButton>Visualización previa</PreviewButton>
        </MenuBar>
        <Workspace>
          <ProjectSidebar />
          <Content>
            <ContentTabs>
              <ContentTab $active>Contenido</ContentTab>
              <ContentTab>Propiedades</ContentTab>
            </ContentTabs>
            <ContentBody>
              <Page>
                <FieldTitle>Texto:</FieldTitle>
                <TextEditor />
                <Feedback><FeedbackLabel><Line size={14} w={1.4} d="M8 1v14M5 4l3-3 3 3M5 12l3 3 3-3" />Retroalimentación (opcional)</FeedbackLabel></Feedback>
                <Actions>
                  <SquareButton aria-label="Guardar"><Line size={12} w={3} d="M2 8l4 4 8-9" /></SquareButton>
                  <SquareButton aria-label="Deshacer"><Line size={12} w={3} d="M2 11q4-8 12 0M2 5v7h6" /></SquareButton>
                  <SquareButton aria-label="Eliminar"><Cross w={3} /></SquareButton>
                  <SquareButton aria-label="Subir"><Fat turn={90} /></SquareButton>
                  <SquareButton aria-label="Bajar"><Fat turn={270} /></SquareButton>
                  <MoveTo aria-label="Mover a"><option>---Mover A---</option></MoveTo>
                </Actions>
              </Page>
              <Track $size={16}>
                <Arrow><Tri /></Arrow><Rest $share={137} /><Thumb $share={269} /><Rest $share={56} /><Arrow><Tri turn={180} /></Arrow>
              </Track>
            </ContentBody>
            <ImageDialog />
          </Content>
        </Workspace>
      </Application>
      <Downloads>
        <Download><Zip />fairytale-castle-cast....zip<DownloadMenu aria-label="Opciones"><Line size={10} box={10} w={1.8} d="M1 7l4-4 4 4" /></DownloadMenu></Download>
        <Download><Zip />fairytale-castle-cast....zip<DownloadMenu aria-label="Opciones"><Line size={10} box={10} w={1.8} d="M1 7l4-4 4 4" /></DownloadMenu></Download>
        <ShowAll>Mostrar todo</ShowAll>
        <CloseShelf aria-label="Cerrar"><Cross /></CloseShelf>
      </Downloads>
      <Windows />
    </Screen>
  );
}
